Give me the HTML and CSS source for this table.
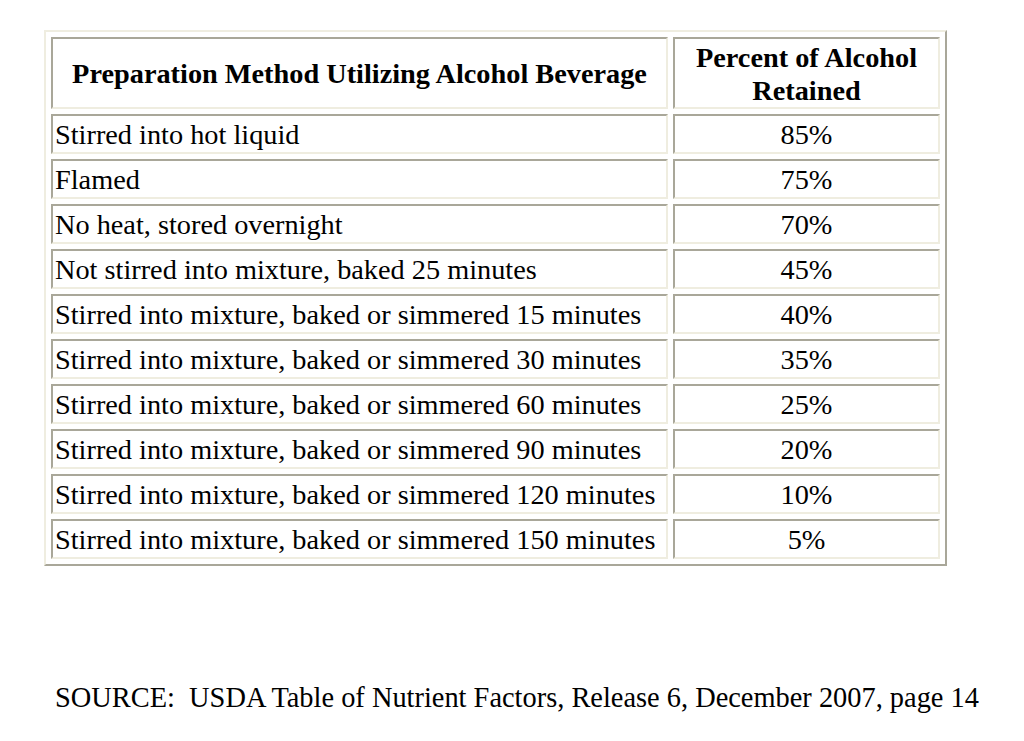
FILE: index.html
```html
<!DOCTYPE html>
<html>
<head>
<meta charset="utf-8">
<link rel="stylesheet" href="styles.css">
</head>
<body>
<table class="ret">
  <thead>
    <tr>
      <th class="c1">Preparation Method Utilizing Alcohol Beverage</th>
      <th class="c2">Percent of Alcohol<br>Retained</th>
    </tr>
  </thead>
  <tbody>
    <tr><td class="c1">Stirred into hot liquid</td><td class="c2">85%</td></tr>
    <tr><td class="c1">Flamed</td><td class="c2">75%</td></tr>
    <tr><td class="c1">No heat, stored overnight</td><td class="c2">70%</td></tr>
    <tr><td class="c1">Not stirred into mixture, baked 25 minutes</td><td class="c2">45%</td></tr>
    <tr><td class="c1">Stirred into mixture, baked or simmered 15 minutes</td><td class="c2">40%</td></tr>
    <tr><td class="c1">Stirred into mixture, baked or simmered 30 minutes</td><td class="c2">35%</td></tr>
    <tr><td class="c1">Stirred into mixture, baked or simmered 60 minutes</td><td class="c2">25%</td></tr>
    <tr><td class="c1">Stirred into mixture, baked or simmered 90 minutes</td><td class="c2">20%</td></tr>
    <tr><td class="c1">Stirred into mixture, baked or simmered 120 minutes</td><td class="c2">10%</td></tr>
    <tr><td class="c1">Stirred into mixture, baked or simmered 150 minutes</td><td class="c2">5%</td></tr>
  </tbody>
</table>
<p class="source">SOURCE:&nbsp; USDA Table of Nutrient Factors, Release 6, December 2007, page 14</p>
</body>
</html>
```
FILE: styles.css
```css
html, body {
  margin: 0;
  padding: 0;
  background: #ffffff;
}
body {
  font-family: "Liberation Serif", "Times New Roman", serif;
  color: #000;
  padding: 30px 0 0 44px;
}
.ret {
  border-collapse: separate;
  border-spacing: 5px;
  border: 2px solid;
  border-color: #efede0 #a9a799 #a9a799 #efede0;
  width: 903px;
  height: 536px;
}
.ret th, .ret td {
  border: 2px solid;
  border-color: #a9a799 #efede0 #efede0 #a9a799;
  padding: 2px 2px 0;
  height: 34px;
  font-size: 28.3px;
  line-height: 32px;
  text-align: left;
}
.ret th {
  height: 67px;
  padding-top: 1px;
  font-weight: bold;
  font-size: 28.3px;
  line-height: 33px;
  text-align: center;
}
.ret .c1 {
  width: 609px;
}
.ret .c2 {
  text-align: center;
}
.source {
  margin: 116px 0 0 11px;
  font-size: 28.4px;
  line-height: 32px;
}
```
